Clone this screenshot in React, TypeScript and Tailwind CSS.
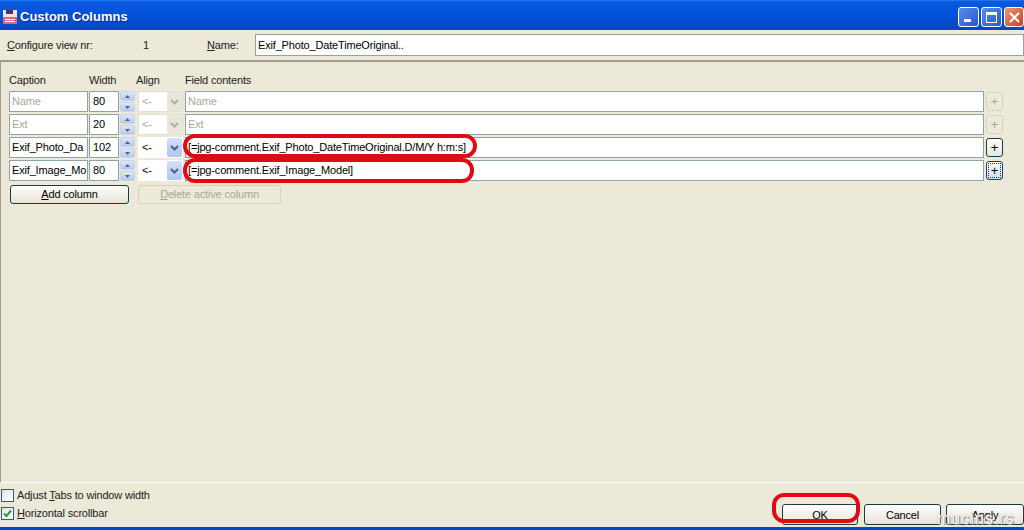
const fieldFont = "[font-family:'Liberation_Sans',Arial,sans-serif]";

const rows = [
  { caption: "Name", width: "80", field: "Name", disabled: true },
  { caption: "Ext", width: "20", field: "Ext", disabled: true },
  { caption: "Exif_Photo_Da", width: "102", field: "[=jpg-comment.Exif_Photo_DateTimeOriginal.D/M/Y h:m:s]", disabled: false },
  { caption: "Exif_Image_Mo", width: "80", field: "[=jpg-comment.Exif_Image_Model]", disabled: false, focused: true },
];

function Spinner() {
  return (
    <div className="flex flex-col w-[15px] h-[21px] gap-px ml-px">
      <div className="flex-1 rounded-[2px] bg-gradient-to-b from-[#dfe7f7] to-[#b6c8ee] border border-[#c6d3ec] flex items-center justify-center">
        <svg width="5" height="3" viewBox="0 0 5 3"><path d="M2.5 0 L5 3 L0 3 Z" fill="#4d6185" /></svg>
      </div>
      <div className="flex-1 rounded-[2px] bg-gradient-to-b from-[#dfe7f7] to-[#b6c8ee] border border-[#c6d3ec] flex items-center justify-center">
        <svg width="5" height="3" viewBox="0 0 5 3"><path d="M0 0 L5 0 L2.5 3 Z" fill="#4d6185" /></svg>
      </div>
    </div>
  );
}

function PlusButton({ disabled, focused }: { disabled: boolean; focused?: boolean }) {
  return (
    <div
      className={`w-[17px] h-[19px] ml-[2px] rounded-[3px] border flex items-center justify-center text-[13px] leading-none ${
        disabled
          ? "border-[#d5d2c3] bg-[#ece9d8] text-[#a8a899]"
          : focused
            ? "border-[#1f3f78] bg-gradient-to-b from-white to-[#cfdcf2] text-black outline-1 outline-dotted outline-offset-[-3px] outline-[#333]"
            : "border-[#1e3a4a] bg-gradient-to-b from-white to-[#e8e6da] text-black"
      }`}
    >
      +
    </div>
  );
}

function Row({ row }: { row: (typeof rows)[number] }) {
  const text = row.disabled ? "text-[#a8a899]" : "text-black";
  return (
    <div className="flex items-center h-[23px]">
      <div className={`w-[79px] h-[21px] ml-[8px] border border-[#8fa3a8] bg-white px-[2px] leading-[19px] overflow-hidden whitespace-nowrap ${text}`}>
        {row.caption}
      </div>
      <div className="w-[30px] h-[21px] ml-px border border-[#8fa3a8] bg-white px-[3px] leading-[19px] text-black">
        {row.width}
      </div>
      <Spinner />
      <div className={`w-[45px] h-[21px] ml-[3px] flex items-center bg-white ${row.disabled ? "border border-[#e3e0d0]" : "border border-white"}`}>
        <span className={`flex-1 pl-[3px] ${text}`}>&lt;-</span>
        <div className={`w-[15px] h-[19px] rounded-[2px] flex items-center justify-center ${row.disabled ? "bg-[#e8e6da]" : "bg-gradient-to-b from-[#d5e0f8] to-[#aec4f2]"}`}>
          <svg width="9" height="6" viewBox="0 0 9 6">
            <path d="M1 1 L4.5 4.5 L8 1" fill="none" stroke={row.disabled ? "#aeb0a4" : "#4d6185"} strokeWidth="2" />
          </svg>
        </div>
      </div>
      <div className={`w-[799px] h-[21px] ml-[2px] border border-[#8fa3a8] bg-white px-[2px] leading-[19px] whitespace-nowrap ${text}`}>
        {row.field}
      </div>
      <PlusButton disabled={row.disabled} focused={row.focused} />
    </div>
  );
}

function Button({ label, className }: { label: string; className: string }) {
  return (
    <div className={`h-[21px] rounded-[3px] border border-[#1e3a4a] bg-gradient-to-b from-white to-[#e6e3d6] text-center leading-[20px] text-black ${className}`}>
      {label}
    </div>
  );
}

export default function App() {
  return (
    <div className={`relative w-[1024px] h-[530px] overflow-hidden bg-[#ece9d8] text-[11px] tracking-[-0.17px] text-[#222] flex flex-col ${fieldFont}`}>
      {/* Title bar */}
      <div className="h-[30px] shrink-0 flex items-center pl-[2px] pt-[3px] bg-gradient-to-b from-[#0a5be0] via-[#0350d8] to-[#0148c4] border-t border-[#1c74ee]">
        <svg width="14" height="14" viewBox="0 0 14 14" className="ml-px">
          <rect x="0" y="0" width="14" height="14" fill="#e8e4ea" />
          <rect x="3" y="0" width="7" height="4" fill="#3c3c64" />
          <rect x="0" y="7" width="14" height="7" fill="#d8697c" />
          <rect x="2" y="9" width="10" height="1" fill="#fff" />
          <rect x="2" y="11" width="10" height="1" fill="#fff" />
        </svg>
        <span className="ml-[3px] text-[13px] tracking-normal font-bold text-white [text-shadow:1px_1px_0_#0a2a80]">Custom Columns</span>
        <div className="ml-auto flex gap-[2px]">
          <div className="w-[21px] h-[20px] rounded-[3px] border border-white bg-gradient-to-br from-[#5a8cf0] to-[#2a56cc] flex items-end pl-[5px] pb-[4px]">
            <div className="w-[7px] h-[3px] bg-white" />
          </div>
          <div className="w-[21px] h-[20px] rounded-[3px] border border-white bg-gradient-to-br from-[#5a8cf0] to-[#2a56cc] flex items-center justify-center">
            <div className="w-[11px] h-[11px] border border-white border-t-[3px]" />
          </div>
          <div className="w-[20px] h-[20px] rounded-[3px] border border-white bg-gradient-to-br from-[#e89878] to-[#c5401c] flex items-center justify-center">
            <svg width="13" height="13" viewBox="0 0 13 13"><path d="M2 2 L11 11 M11 2 L2 11" stroke="#fff" strokeWidth="2" /></svg>
          </div>
        </div>
      </div>

      {/* Configure view row */}
      <div className="h-[32px] shrink-0 flex items-center border-b-2 border-[#a09c8c]">
        <span className="ml-[7px] w-[136px]"><u>C</u>onfigure view nr:</span>
        <span className="w-[64px]">1</span>
        <span className="w-[48px]"><u>N</u>ame:</span>
        <div className="w-[769px] h-[22px] border border-[#8fa3a8] bg-white px-[2px] leading-[20px] text-black">
          Exif_Photo_DateTimeOriginal..
        </div>
      </div>

      {/* Columns panel */}
      <div className="flex-1 min-h-0 border-l-2 border-[#a09c8c] border-b border-b-white -ml-px pt-[8px]">
        <div className="flex h-[20px] items-center">
          <span className="ml-[8px] w-[80px]">Caption</span>
          <span className="w-[47px]">Width</span>
          <span className="w-[49px]">Align</span>
          <span>Field contents</span>
        </div>
        <div className="flex flex-col">
          {rows.map((row) => (
            <Row key={row.caption} row={row} />
          ))}
        </div>
        <div className="flex mt-[3px] ml-[9px]">
          <div className="w-[119px] h-[19px] rounded-[3px] border border-[#1e3a4a] bg-gradient-to-b from-white to-[#e6e3d6] text-center leading-[17px] text-black">
            <u>A</u>dd column
          </div>
          <div className="w-[143px] h-[19px] ml-[9px] rounded-[3px] border border-[#d5d2c3] text-center leading-[17px] text-[#a8a899]">
            <u>D</u>elete active column
          </div>
        </div>
      </div>

      {/* Footer */}
      <div className="h-[44px] shrink-0 flex items-start justify-between">
        <div className="flex flex-col pt-[6px] gap-[5px]">
          <label className="flex items-center h-[13px] ml-[1px] gap-[3px]">
            <span className="w-[13px] h-[13px] border border-[#3a5a78] bg-gradient-to-br from-[#dfe4ea] to-white" />
            <span>Adjust <u>T</u>abs to window width</span>
          </label>
          <label className="flex items-center h-[13px] ml-[1px] gap-[3px]">
            <span className="w-[13px] h-[13px] border border-[#3a5a78] bg-gradient-to-br from-[#dfe4ea] to-white flex items-center justify-center">
              <svg width="9" height="9" viewBox="0 0 9 9"><path d="M1 4.5 L3.5 7 L8 1.5" fill="none" stroke="#2f9a3c" strokeWidth="2" /></svg>
            </span>
            <span><u>H</u>orizontal scrollbar</span>
          </label>
        </div>
        <div className="flex pt-[21px]">
          <Button label="OK" className="w-[76px]" />
          <Button label="Cancel" className="w-[77px] ml-[6px]" />
          <Button label="Apply" className="w-[78px] ml-[5px]" />
        </div>
      </div>
      <div className="h-[3px] shrink-0 bg-[#0348c8]" />

      {/* Red annotations drawn on the screenshot */}
      <div className="absolute left-[183px] top-[134px] w-[294px] h-[24px] rounded-[12px] border-[4px] border-[#e00a14]" />
      <div className="absolute left-[183px] top-[158px] w-[291px] h-[25px] rounded-[12px] border-[4px] border-[#e00a14]" />
      <div className="absolute left-[772px] top-[493px] w-[88px] h-[30px] rounded-[12px] border-[4px] border-[#e00a14]" />

      {/* Watermark */}
      <div className="absolute left-[937px] top-[507px] text-[16px] tracking-[1px] text-white [text-shadow:0_0_1px_#777,1px_1px_0_#8a8a8a]">
        mucins.rs
      </div>
    </div>
  );
}
